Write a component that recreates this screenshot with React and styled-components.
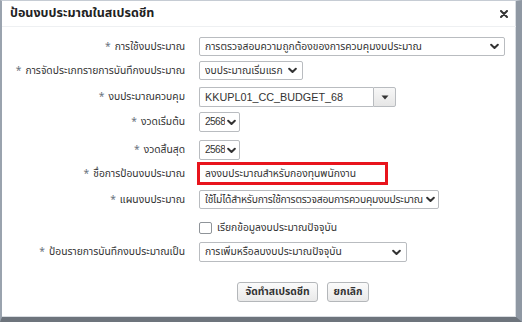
import React from "react";
import styled, { createGlobalStyle } from "styled-components";

const Global = createGlobalStyle`
  html, body { margin: 0; padding: 0; background: #fff; }
  body { font-family: "Noto Sans Thai", "Liberation Sans", "Noto Sans", sans-serif; }
  * { box-sizing: border-box; }
`;

const Dialog = styled.div`
  width: 522px;
  height: 322px;
  background: #fff;
  border-top: 1px solid #c6ccd4;
  border-left: 2px solid #9aa3ae;
  border-right: 6px solid #8f98a3;
  border-bottom: 5px solid #6d747c;
  box-shadow: inset -1px -1px 0 #d9dde2;
  display: flex;
  flex-direction: column;
  color: #333;
`;

const Header = styled.div`
  height: 26px;
  display: flex;
  align-items: center;
  justify-content: space-between;
  padding: 0 8px 0 8px;
  border-bottom: 1px solid #eef0f2;
`;

const Title = styled.div`
  font-size: 12.5px;
  font-weight: bold;
  color: #222;
`;

const Form = styled.div`
  display: grid;
  grid-template-columns: 183px 1fr;
  column-gap: 14px;
  padding-top: 10px;
`;

const Label = styled.div`
  font-size: 10.3px;
  color: #333;
  white-space: nowrap;
  height: ${(p) => p.h}px;
  display: flex;
  align-items: flex-start;
  justify-content: flex-end;
`;

const LabelLine = styled.div`
  height: ${(p) => p.c}px;
  display: flex;
  align-items: center;
`;

const Star = styled.span`
  color: #6a7480;
  margin-right: 4px;
`;

const Cell = styled.div`
  height: ${(p) => p.h}px;
  display: flex;
  align-items: flex-start;
`;

const Select = styled.div`
  width: ${(p) => p.w}px;
  height: ${(p) => p.hh || 19}px;
  border: 1px solid #b9bcc0;
  border-radius: 2px;
  background: #fff;
  display: flex;
  align-items: center;
  padding: 0 ${(p) => p.pr || 5}px 0 5px;
  font-size: 10.3px;
  letter-spacing: ${(p) => (p.tight ? "-0.2px" : "normal")};
  color: #333;
  overflow: hidden;
  white-space: nowrap;
`;

const SelText = styled.span`
  flex: 1;
  overflow: hidden;
  white-space: nowrap;
`;

const Num = styled.span`
  font-family: "Liberation Sans", sans-serif;
  font-size: 10px;
  letter-spacing: -0.5px;
`;

const Chev = styled.svg`
  flex: none;
  margin-left: 2px;
`;

const Combo = styled.div`
  display: flex;
  height: 20px;
`;

const ComboInput = styled.div`
  width: 174px;
  height: 20px;
  border: 1px solid #b9bcc0;
  border-right: none;
  border-radius: 2px 0 0 2px;
  font-size: 10.8px;
  font-family: "Liberation Sans", sans-serif;
  padding-left: 5px;
  display: flex;
  align-items: center;
  color: #333;
`;

const ComboBtn = styled.div`
  width: 23px;
  height: 20px;
  border: 1px solid #b9bcc0;
  border-radius: 0 2px 2px 0;
  background: linear-gradient(#f7f7f7, #e6e6e6);
  display: flex;
  align-items: center;
  justify-content: center;
`;

const Highlight = styled.div`
  margin-left: -2px;
  width: 191px;
  height: 23px;
  border: 3px solid #e8141c;
  display: flex;
`;

const TextInput = styled.div`
  flex: 1;
  background: #fff;
  font-size: 10.3px;
  padding-left: 5px;
  display: flex;
  align-items: center;
  color: #333;
`;

const Check = styled.label`
  display: flex;
  align-items: center;
  gap: 5px;
  font-size: 10.3px;
  color: #333;
  height: 12px;
`;

const Box = styled.span`
  width: 13px;
  height: 12px;
  border: 1px solid #8f9499;
  border-radius: 2px;
  background: #fff;
`;

const Buttons = styled.div`
  display: flex;
  padding-left: 235px;
  gap: 9px;
  margin-top: 20px;
`;

const Button = styled.div`
  height: 20px;
  width: ${(p) => p.w}px;
  border: 1px solid #b4b7ba;
  border-radius: 3px;
  background: linear-gradient(#fbfbfb, #e9e9e9);
  font-size: 10.3px;
  font-weight: bold;
  color: #333;
  display: flex;
  align-items: center;
  justify-content: center;
`;

const ChevronIcon = () => (
  <Chev width="9" height="7" viewBox="0 0 10 7">
    <path d="M1.3 1.5 L5 5.2 L8.7 1.5" fill="none" stroke="#333" strokeWidth="2.2" strokeLinecap="round" strokeLinejoin="round" />
  </Chev>
);

const Triangle = () => (
  <svg width="8" height="5" viewBox="0 0 8 5">
    <path d="M0.5 0.5 H7.5 L4 4.5 Z" fill="#333" />
  </svg>
);

const CloseIcon = () => (
  <svg width="8" height="8" viewBox="0 0 8 8">
    <path d="M1 1 L7 7 M7 1 L1 7" stroke="#333" strokeWidth="2" strokeLinecap="round" />
  </svg>
);

const Req = ({ children, h, c }) => (
  <Label h={h}>
    <LabelLine c={c}>
      <Star>*</Star>
      {children}
    </LabelLine>
  </Label>
);

export default function App() {
  return (
    <>
      <Global />
      <Dialog>
        <Header>
          <Title>ป้อนงบประมาณในสเปรดชีท</Title>
          <CloseIcon />
        </Header>
        <Form>
          <Req h={24} c={19}>การใช้งบประมาณ</Req>
          <Cell h={24}>
            <Select w={306}>
              <SelText>การตรวจสอบความถูกต้องของการควบคุมงบประมาณ</SelText>
              <ChevronIcon />
            </Select>
          </Cell>

          <Req h={26} c={19}>การจัดประเภทรายการบันทึกงบประมาณ</Req>
          <Cell h={26}>
            <Select w={104}>
              <SelText>งบประมาณเริ่มแรก</SelText>
              <ChevronIcon />
            </Select>
          </Cell>

          <Req h={25} c={20}>งบประมาณควบคุม</Req>
          <Cell h={25}>
            <Combo>
              <ComboInput>KKUPL01_CC_BUDGET_68</ComboInput>
              <ComboBtn>
                <Triangle />
              </ComboBtn>
            </Combo>
          </Cell>

          <Req h={28} c={20}>งวดเริ่มต้น</Req>
          <Cell h={28}>
            <Select w={41} hh={20} pr={3}>
              <SelText><Num>2568</Num></SelText>
              <ChevronIcon />
            </Select>
          </Cell>

          <Req h={22} c={20}>งวดสิ้นสุด</Req>
          <Cell h={22}>
            <Select w={41} hh={20} pr={3}>
              <SelText><Num>2568</Num></SelText>
              <ChevronIcon />
            </Select>
          </Cell>

          <Req h={28} c={23}>ชื่อการป้อนงบประมาณ</Req>
          <Cell h={28}>
            <Highlight>
              <TextInput>ลงงบประมาณสำหรับกองทุนพนักงาน</TextInput>
            </Highlight>
          </Cell>

          <Req h={32} c={19}>แผนงบประมาณ</Req>
          <Cell h={32}>
            <Select w={240} pr={3} tight>
              <SelText>ใช้ไม่ได้สำหรับการใช้การตรวจสอบการควบคุมงบประมาณ</SelText>
              <ChevronIcon />
            </Select>
          </Cell>

          <Label h={20} />
          <Cell h={20}>
            <Check>
              <Box />
              เรียกข้อมูลงบประมาณปัจจุบัน
            </Check>
          </Cell>

          <Req h={20} c={20}>ป้อนรายการบันทึกงบประมาณเป็น</Req>
          <Cell h={20}>
            <Select w={208} hh={20}>
              <SelText>การเพิ่มหรือลบงบประมาณปัจจุบัน</SelText>
              <ChevronIcon />
            </Select>
          </Cell>
        </Form>
        <Buttons>
          <Button w={81}>จัดทำสเปรดชีท</Button>
          <Button w={42}>ยกเลิก</Button>
        </Buttons>
      </Dialog>
    </>
  );
}
